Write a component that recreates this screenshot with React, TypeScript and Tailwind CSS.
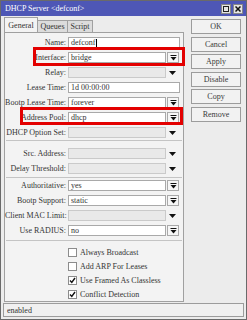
import React from "react";

const font = { fontFamily: '"Liberation Serif", "Times New Roman", serif' };

function DropIcon() {
  return (
    <svg width="7" height="6" viewBox="0 0 7 6">
      <rect x="0.5" y="0" width="6" height="1" fill="#111" />
      <path d="M0.5 2h6L3.5 5.5z" fill="#111" />
    </svg>
  );
}

function Row({ label, children }: { label: string; children: React.ReactNode }) {
  return (
    <div className="flex h-[15px] items-center">
      <div className="w-[62px] pr-[1px] text-right whitespace-nowrap">{label}</div>
      <div className="ml-[1px] flex items-center">{children}</div>
    </div>
  );
}

function TextField({ value, caret }: { value: string; caret?: boolean }) {
  return (
    <div className="flex h-[11px] w-[112px] items-center border border-[#a9a9a9] bg-white pl-[2px] leading-[9px]">
      {value}
      {caret && <span className="ml-[1px] inline-block h-[8px] w-[1px] bg-black" />}
    </div>
  );
}

function DropField({ value }: { value: string }) {
  return (
    <>
      <div className="flex h-[11px] w-[98px] items-center border border-[#a9a9a9] bg-white pl-[2px] leading-[9px]">
        {value}
      </div>
      <div className="ml-[1px] flex h-[11px] w-[12px] items-center justify-center border border-[#a9a9a9] bg-[#f6f6f6]">
        <DropIcon />
      </div>
    </>
  );
}

function DisabledField() {
  return (
    <>
      <div className="h-[11px] w-[98px] border border-[#cacaca] bg-[#e9e9e9]" />
      <div className="flex w-[13px] justify-center">
        <svg width="7" height="4" viewBox="0 0 7 4">
          <path d="M0 0h7L3.5 4z" fill="#111" />
        </svg>
      </div>
    </>
  );
}

function Check({ label, checked }: { label: string; checked?: boolean }) {
  return (
    <div className="flex h-[14px] items-center pl-[63px]">
      <div className="flex h-[9px] w-[9px] items-center justify-center border border-[#8c8c8c] bg-white">
        {checked && (
          <svg width="7" height="7" viewBox="0 0 7 7">
            <path d="M1 3.5l1.8 2L6 1" stroke="#111" strokeWidth="1.4" fill="none" />
          </svg>
        )}
      </div>
      <span className="ml-[3px] whitespace-nowrap">{label}</span>
    </div>
  );
}

function Sep({ className }: { className?: string }) {
  return <div className={"h-[1px] bg-[#c4c4c4] " + (className ?? "")} />;
}

function Btn({ label }: { label: string }) {
  return (
    <div className="flex h-[15px] w-[50px] items-center justify-center border border-[#9c9c9c] bg-[#f2f2f2] text-[#3a3a3a]">
      {label}
    </div>
  );
}

export default function App() {
  return (
    <div
      style={font}
      className="relative flex h-[320px] w-[247px] flex-col overflow-hidden border border-[#6a6a6a] bg-[#ececec] text-[8px] leading-[9px] text-[#333]"
    >
      {/* title bar */}
      <div className="flex h-[15px] items-center justify-between bg-[#4e57b6] pl-[4px] pr-[3px] text-white">
        <span className="text-[8px]">DHCP Server &lt;defconf&gt;</span>
        <div className="flex gap-[2px]">
          <div className="flex h-[10px] w-[10px] items-center justify-center border border-[#888] bg-[#e4e4e4]">
            <div className="h-[6px] w-[6px] border border-[#222]" />
          </div>
          <div className="flex h-[10px] w-[10px] items-center justify-center border border-[#888] bg-[#e4e4e4]">
            <svg width="6" height="6" viewBox="0 0 6 6">
              <path d="M0.5 0.5l5 5M5.5 0.5l-5 5" stroke="#111" strokeWidth="1.5" />
            </svg>
          </div>
        </div>
      </div>

      {/* body */}
      <div className="mb-[1px] flex flex-1">
        <div className="ml-[3px] mt-[2px] flex w-[180px] flex-col">
          {/* tabs */}
          <div className="relative z-10 flex h-[14px] items-end">
            <div className="flex h-[15px] w-[34px] items-center justify-center border border-b-0 border-[#a0a0a0] bg-[#f3f3f3] pt-[1px]">
              General
            </div>
            <div className="flex h-[12px] w-[30px] items-center justify-center border border-b-0 border-l-0 border-[#a0a0a0] bg-[#dcdcdc]">
              Queues
            </div>
            <div className="flex h-[12px] w-[25px] items-center justify-center border border-b-0 border-l-0 border-[#a0a0a0] bg-[#dcdcdc]">
              Script
            </div>
          </div>
          {/* panel */}
          <div className="flex flex-1 flex-col border border-[#a0a0a0] bg-[#f3f3f3] pt-[2px]">
            <div>
              <Row label="Name:">
                <TextField value="defconf" caret />
              </Row>
              <Row label="Interface:">
                <DropField value="bridge" />
              </Row>
              <Row label="Relay:">
                <DisabledField />
              </Row>
              <Row label="Lease Time:">
                <TextField value="1d 00:00:00" />
              </Row>
              <Row label="Bootp Lease Time:">
                <DropField value="forever" />
              </Row>
              <Row label="Address Pool:">
                <DropField value="dhcp" />
              </Row>
              <Row label="DHCP Option Set:">
                <DisabledField />
              </Row>
            </div>
            <Sep className="mx-[1px]" />
            <div className="pt-[5px]">
              <Row label="Src. Address:">
                <DisabledField />
              </Row>
              <Row label="Delay Threshold:">
                <DisabledField />
              </Row>
            </div>
            <Sep className="mx-[1px] mt-[1px]" />
            <div>
              <Row label="Authoritative:">
                <DropField value="yes" />
              </Row>
              <Row label="Bootp Support:">
                <DropField value="static" />
              </Row>
              <Row label="Client MAC Limit:">
                <DisabledField />
              </Row>
              <Row label="Use RADIUS:">
                <DropField value="no" />
              </Row>
            </div>
            <Sep className="mx-[1px] mt-[2px]" />
            <div className="mt-[4px]">
              <Check label="Always Broadcast" />
              <Check label="Add ARP For Leases" />
              <Check label="Use Framed As Classless" checked />
              <Check label="Conflict Detection" checked />
            </div>
          </div>
        </div>

        {/* right buttons */}
        <div className="ml-[7px] mt-[3px] flex flex-col gap-[2.5px]">
          <Btn label="OK" />
          <Btn label="Cancel" />
          <Btn label="Apply" />
          <Btn label="Disable" />
          <Btn label="Copy" />
          <Btn label="Remove" />
        </div>
      </div>

      {/* status bar */}
      <div className="mx-[2px] mb-[2px] flex h-[14px] items-center border border-[#9c9c9c] bg-[#f0f0f0] pl-[3px]">
        enabled
      </div>

      {/* red annotation boxes */}
      <div className="pointer-events-none absolute left-[32px] top-[46px] h-[19px] w-[152px] border-[3px] border-[#e30000]" />
      <div className="pointer-events-none absolute left-[19px] top-[106px] h-[18px] w-[163px] border-[3px] border-[#e30000]" />
    </div>
  );
}
